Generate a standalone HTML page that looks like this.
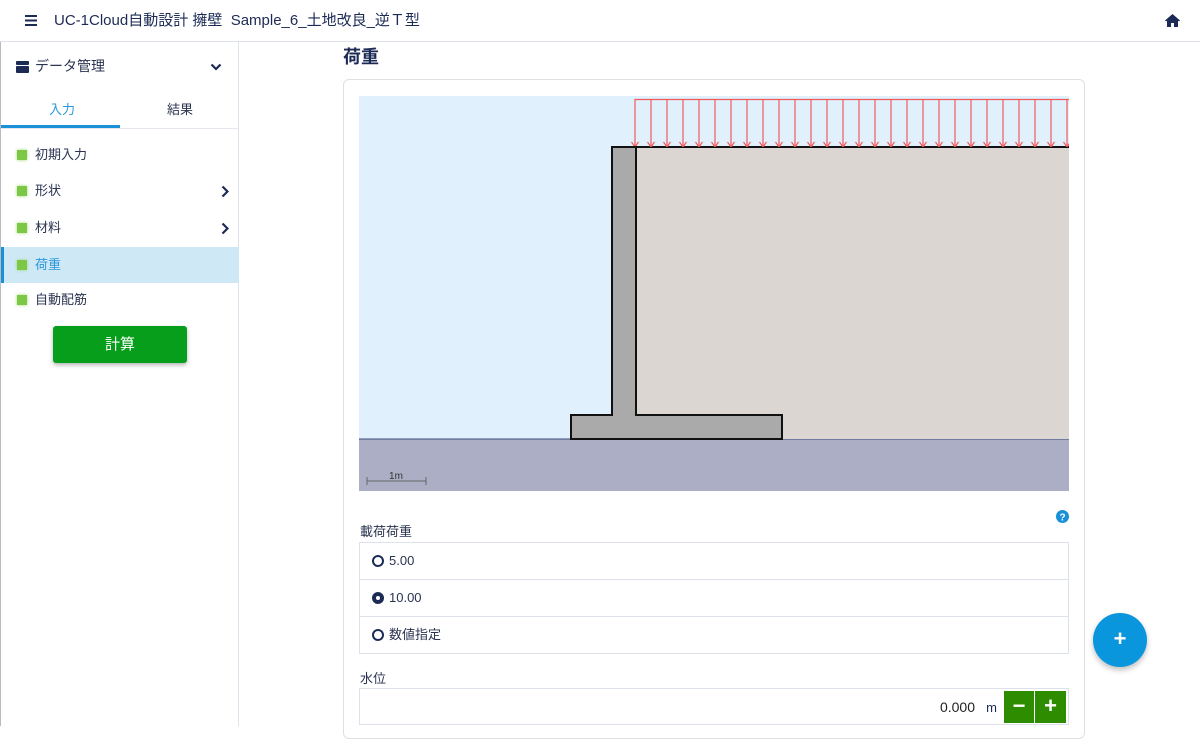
<!DOCTYPE html>
<html><head><meta charset="utf-8"><style>
*{box-sizing:border-box;margin:0;padding:0}
body{width:1200px;height:726px;overflow:hidden;background:#fff;font-family:"Liberation Sans","Noto Sans CJK JP",sans-serif;color:#1a2a4a;position:relative;line-height:1.2}
.top{position:absolute;left:0;top:0;width:1200px;height:42px;border-bottom:1px solid #dde2ec;background:#fff}
.top .t{position:absolute;left:54px;top:12px;font-size:15px;color:#1c2b55;line-height:18px}
.side{position:absolute;left:0;top:42px;width:239px;height:684px;border-right:1px solid #dde2ec;border-left:1px solid #bbb}
.item{position:absolute;left:0;width:238px;height:36px;font-size:13px;color:#2a3350;display:flex;align-items:center}
.item .sq{position:absolute;left:16px;top:13px;width:10px;height:10px;background:#7cc846;box-shadow:0 0 3px #9ad870}
.item .tx{position:absolute;left:34px;top:10px;line-height:16px}
.chev{position:absolute;right:10px;top:12px}
.card{position:absolute;left:343px;top:79px;width:742px;height:660px;border:1px solid #e0e0e0;border-radius:6px}
.lbl{position:absolute;font-size:13px;color:#2a3350;line-height:16px}
.opt{position:absolute;left:359px;width:710px;height:38px;border:1px solid #dde1ea;font-size:13px;color:#2a3350;display:flex;align-items:center;padding-left:12px}
.rad{width:12px;height:12px;border:2px solid #1c2b55;border-radius:50%;margin-right:5px;flex:none}
</style></head><body>
<div class="top">
<svg style="position:absolute;left:25px;top:15px" width="12" height="11"><rect y="0" width="12" height="2" fill="#1c2b55"/><rect y="4.5" width="12" height="2" fill="#1c2b55"/><rect y="9" width="12" height="2" fill="#1c2b55"/></svg>
<div class="t">UC-1Cloud自動設計 擁壁&nbsp; Sample_6_土地改良_逆Ｔ型</div>
<svg style="position:absolute;left:1165px;top:14px" width="15" height="13" viewBox="0 0 15 13"><path d="M7.5 0L0 6.5l1 1 1-.9V13h4V9h3v4h4V6.6l1 .9 1-1z" fill="#1c2b55"/></svg>
</div>
<div class="side">
<svg style="position:absolute;left:15px;top:19px" width="13" height="12"><rect x="0" y="0" width="13" height="4" rx="1" fill="#1c2b55"/><rect x="0" y="5" width="13" height="7" rx="1" fill="#1c2b55"/></svg>
<div style="position:absolute;left:34px;top:16px;font-size:14px;color:#2a3350;line-height:17px">データ管理</div>
<svg style="position:absolute;left:209px;top:21px" width="12" height="8"><path d="M1.5 1.5l4.5 4.5 4.5-4.5" stroke="#1c2b55" stroke-width="2.2" fill="none"/></svg>
<div style="position:absolute;left:48px;top:60px;font-size:13px;color:#2a98d8;line-height:16px">入力</div>
<div style="position:absolute;left:166px;top:60px;font-size:13px;color:#2a3350;line-height:16px">結果</div>
<div style="position:absolute;left:0;top:83px;width:119px;height:3px;background:#1a90d8"></div>
<div style="position:absolute;left:0;top:86px;width:238px;height:1px;background:#e4e8ee"></div>
<div class="item" style="top:95px"><div class="sq"></div><div class="tx">初期入力</div></div>
<div class="item" style="top:131px"><div class="sq"></div><div class="tx">形状</div><svg class="chev" width="8" height="13"><path d="M1.5 1.5l5 5-5 5" stroke="#1c2b55" stroke-width="2.2" fill="none"/></svg></div>
<div class="item" style="top:168px"><div class="sq"></div><div class="tx">材料</div><svg class="chev" width="8" height="13"><path d="M1.5 1.5l5 5-5 5" stroke="#1c2b55" stroke-width="2.2" fill="none"/></svg></div>
<div class="item" style="top:205px;background:#cfe8f6;border-left:3px solid #1a90d8"><div class="sq" style="left:13px"></div><div class="tx" style="left:31px;color:#2a98d8">荷重</div></div>
<div class="item" style="top:240px"><div class="sq"></div><div class="tx">自動配筋</div></div>
<div style="position:absolute;left:52px;top:284px;width:134px;height:37px;background:#069e1a;border-radius:3px;box-shadow:0 2px 4px rgba(0,0,0,.3);color:#fff;font-size:15px;text-align:center;line-height:37px">計算</div>
</div>
<div style="position:absolute;left:343px;top:46px;font-size:18px;font-weight:bold;color:#1c2b55;line-height:22px">荷重</div>
<div class="card"></div>
<svg style="position:absolute;left:359px;top:96px" width="710" height="395" viewBox="359 96 710 395">
<defs><pattern id="ar" x="627" y="96" width="16" height="60" patternUnits="userSpaceOnUse"><path d="M8 3V51M4.5 46L8 51 11.5 46" stroke="#f05a5a" stroke-width="1.2" fill="none"/></pattern></defs>
<rect x="359" y="96" width="710" height="343" fill="#e0f0fc"/>
<rect x="359" y="439" width="710" height="52" fill="#abaec4"/>
<line x1="359" y1="439" x2="1069" y2="439" stroke="#3a4a7a" stroke-width="1"/>
<rect x="636" y="147" width="433" height="292" fill="#dbd6d2"/>
<line x1="636" y1="147" x2="1069" y2="147" stroke="#111" stroke-width="2"/>
<rect x="627" y="96" width="442" height="51" fill="url(#ar)"/>
<line x1="635" y1="99.5" x2="1069" y2="99.5" stroke="#f05a5a" stroke-width="1.2"/>
<path d="M612 147H636V415H782V439H571V415H612Z" fill="#aaa" stroke="#111" stroke-width="2"/>
<path d="M367 481H426M367 477V485M426 477V485" stroke="#666" stroke-width="1"/>
<text x="396" y="479" font-size="10" text-anchor="middle" fill="#333" font-family="Liberation Sans,sans-serif">1m</text>
</svg>
<svg style="position:absolute;left:1056px;top:510px" width="13" height="13"><circle cx="6.5" cy="6.5" r="6.5" fill="#1a90d8"/><text x="6.5" y="10.5" font-size="10" font-weight="bold" text-anchor="middle" fill="#fff" font-family="Liberation Sans,sans-serif">?</text></svg>
<div class="lbl" style="left:360px;top:524px">載荷荷重</div>
<div class="opt" style="top:542px"><div class="rad"></div><span>5.00</span></div>
<div class="opt" style="top:579px"><div class="rad" style="border-width:4px"></div><span>10.00</span></div>
<div class="opt" style="top:616px"><div class="rad"></div><span>数値指定</span></div>
<div class="lbl" style="left:360px;top:671px">水位</div>
<div class="opt" style="top:688px;height:37px"><div style="position:absolute;right:93px;top:10px;font-size:14px;color:#222;line-height:17px">0.000</div><div style="position:absolute;right:71px;top:10px;color:#1c2b55;line-height:17px">m</div></div>
<div style="position:absolute;left:1004px;top:691px;width:30px;height:32px;background:#2e8c00;color:#fff;font-size:22px;font-weight:bold;text-align:center;line-height:30px">−</div>
<div style="position:absolute;left:1035px;top:691px;width:31px;height:32px;background:#2e8c00;color:#fff;font-size:22px;font-weight:bold;text-align:center;line-height:30px">+</div>
<div style="position:absolute;left:1093px;top:613px;width:54px;height:54px;border-radius:50%;background:#0a96dc;box-shadow:0 3px 6px rgba(0,0,0,.25);color:#fff;font-size:22px;font-weight:bold;text-align:center;line-height:52px">+</div>
</body></html>
